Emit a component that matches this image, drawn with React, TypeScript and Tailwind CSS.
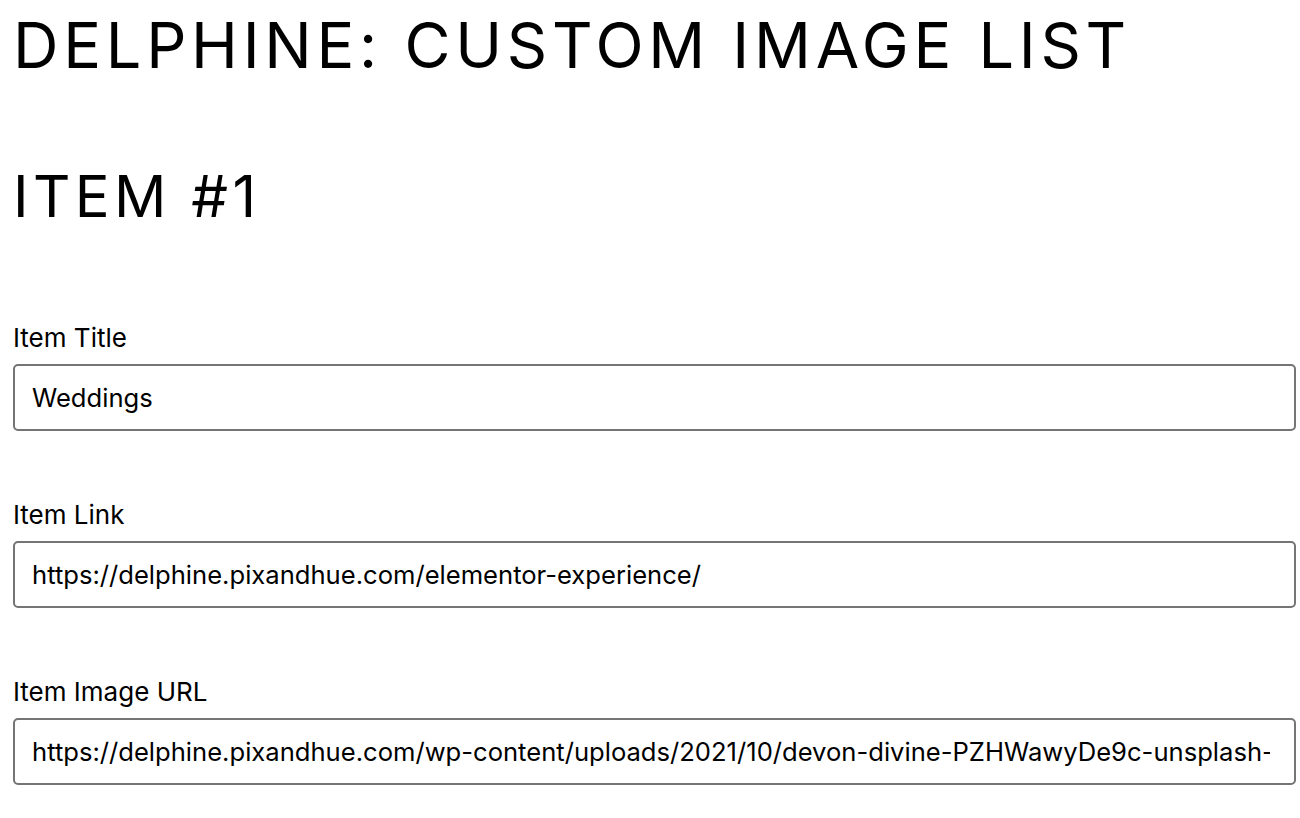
export default function App() {
    const fields = [
        { label: 'Item Title', value: 'Weddings' },
        { label: 'Item Link', value: 'https://delphine.pixandhue.com/elementor-experience/' },
        {
            label: 'Item Image URL',
            value: 'https://delphine.pixandhue.com/wp-content/uploads/2021/10/devon-divine-PZHWawyDe9c-unsplash-scaled.jpg',
        },
    ];

    return (
        <div className="min-h-screen bg-white text-black font-['Inter',sans-serif] pl-[13px] pr-[4px] overflow-hidden">
            {/* Page heading */}
            <h1 className="text-[63px] leading-none tracking-[0.075em] font-normal pt-[14px]">
                DELPHINE: CUSTOM IMAGE LIST
            </h1>

            {/* Item section */}
            <h2 className="text-[58px] leading-none tracking-[0.075em] font-normal mt-[90px]">
                ITEM #1
            </h2>

            <div className="flex flex-col mt-[97px] gap-[68px]">
                {fields.map((f) => (
                    <label key={f.label} className="flex flex-col">
                        <span className="text-[26px] leading-[32px] mb-[10px]">{f.label}</span>
                        <input
                            type="text"
                            readOnly
                            value={f.value}
                            className="h-[67px] w-full rounded-[5px] border-2 border-[#757575] pl-[17px] pr-[24px] text-[25.6px] text-black outline-none bg-white"
                        />
                    </label>
                ))}
            </div>
        </div>
    );
}
